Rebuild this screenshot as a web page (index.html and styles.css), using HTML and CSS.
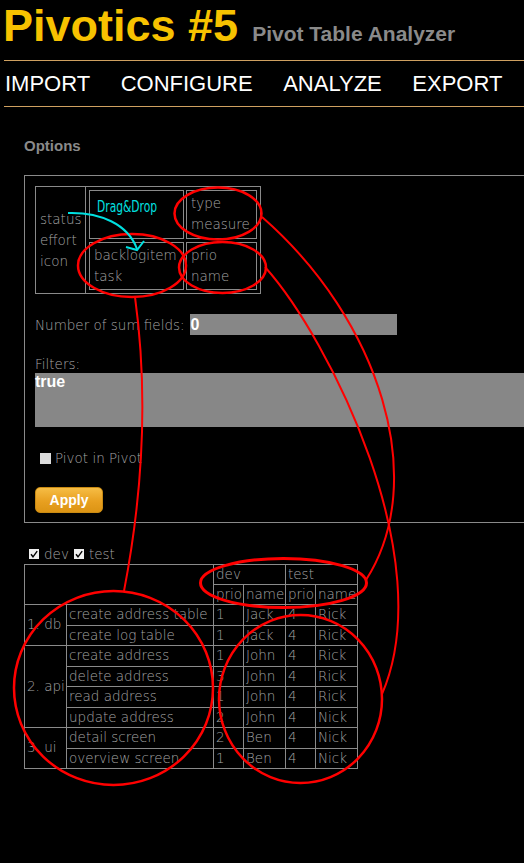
FILE: index.html
```html
<!DOCTYPE html>
<html>
<head>
<meta charset="utf-8">
<title>Pivotics #5</title>
<link rel="stylesheet" href="styles.css">
</head>
<body>
<header class="masthead">
  <div class="brand">
    <h1 class="title">Pivotics #5</h1>
    <span class="subtitle">Pivot Table Analyzer</span>
  </div>
  <nav class="nav">
    <a class="nav-item">IMPORT</a>
    <a class="nav-item">CONFIGURE</a>
    <a class="nav-item">ANALYZE</a>
    <a class="nav-item">EXPORT</a>
  </nav>
</header>

<main class="content">
  <h2 class="section-title">Options</h2>
  <section class="options">
    <div class="fields">
      <div class="fields-pool">status<br>effort<br>icon</div>
      <div class="fields-grid">
        <div class="field-cell"></div>
        <div class="field-cell">type<br>measure</div>
        <div class="field-cell">backlogitem<br>task</div>
        <div class="field-cell">prio<br>name</div>
      </div>
    </div>

    <div class="sum-row">
      <span class="sum-label">Number of sum fields:</span>
      <span class="text-input">0</span>
    </div>

    <div class="filters-label">Filters:</div>
    <div class="textarea">true</div>

    <div class="check-row">
      <span class="box"></span>
      <span>Pivot in Pivot</span>
    </div>

    <button class="apply">Apply</button>
  </section>

  <div class="toggles">
    <span class="toggle"><svg class="tick" width="10" height="10" viewBox="0 0 10 10"><rect width="10" height="10" fill="#efefef"/><path d="M2 5.2 L4 7.8 L8.2 2.2" fill="none" stroke="#000" stroke-width="1.4"/></svg>dev</span>
    <span class="toggle"><svg class="tick" width="10" height="10" viewBox="0 0 10 10"><rect width="10" height="10" fill="#efefef"/><path d="M2 5.2 L4 7.8 L8.2 2.2" fill="none" stroke="#000" stroke-width="1.4"/></svg>test</span>
  </div>

  <table class="pivot">
    <colgroup>
      <col class="c-group"><col class="c-task"><col class="c-prio"><col class="c-name"><col class="c-prio"><col class="c-name2">
    </colgroup>
    <thead>
      <tr><th colspan="2" rowspan="2"></th><th colspan="2">dev</th><th colspan="2">test</th></tr>
      <tr><th>prio</th><th>name</th><th>prio</th><th>name</th></tr>
    </thead>
    <tbody>
      <tr><td rowspan="2">1. db</td><td>create address table</td><td>1</td><td>Jack</td><td>4</td><td>Rick</td></tr>
      <tr><td>create log table</td><td>1</td><td>Jack</td><td>4</td><td>Rick</td></tr>
      <tr><td rowspan="4">2. api</td><td>create address</td><td>1</td><td>John</td><td>4</td><td>Rick</td></tr>
      <tr><td>delete address</td><td>3</td><td>John</td><td>4</td><td>Rick</td></tr>
      <tr><td>read address</td><td>1</td><td>John</td><td>4</td><td>Rick</td></tr>
      <tr><td>update address</td><td>2</td><td>John</td><td>4</td><td>Nick</td></tr>
      <tr><td rowspan="2">3. ui</td><td>detail screen</td><td>2</td><td>Ben</td><td>4</td><td>Nick</td></tr>
      <tr><td>overview screen</td><td>1</td><td>Ben</td><td>4</td><td>Nick</td></tr>
    </tbody>
  </table>
</main>

<svg class="annotations" width="524" height="863" viewBox="0 0 524 863">
  <g fill="none" stroke="#ff0000">
    <ellipse cx="218" cy="213.5" rx="43.5" ry="26" stroke-width="2.5"/>
    <ellipse cx="222.5" cy="267.5" rx="43.5" ry="25.5" stroke-width="2.5"/>
    <ellipse cx="132" cy="265.5" rx="54" ry="31.5" stroke-width="2.5"/>
    <ellipse cx="283.5" cy="583" rx="83" ry="24.5" stroke-width="3"/>
    <ellipse cx="113.5" cy="688" rx="99.5" ry="97" stroke-width="2.5"/>
    <ellipse cx="300.5" cy="699" rx="81.5" ry="84" stroke-width="2.5"/>
    <path d="M135 297 Q154 435 124 591" stroke-width="2"/>
    <path d="M262 217 C380 320 430 480 366 580" stroke-width="2"/>
    <path d="M265 267 C330 340 440 560 382 694" stroke-width="2"/>
  </g>
  <g fill="none" stroke="#00e0e0" stroke-width="2">
    <path d="M68 213 C100 212 128 224 137 249"/>
    <path d="M126 247 L137 250 L144 241"/>
  </g>
  <text class="dnd" x="97" y="212" textLength="60" lengthAdjust="spacingAndGlyphs">Drag&amp;Drop</text>
</svg>
</body>
</html>
```

FILE: styles.css
```css
html {
  overflow: hidden;
}

body {
  margin: 0;
  width: 524px;
  min-height: 863px;
  position: relative;
  background: #000;
  color: #a4a4a4;
  font-family: "DejaVu Sans", "Liberation Sans", sans-serif;
  font-weight: 200;
  font-size: 13.5px;
}

/* ---------- header ---------- */
.masthead {
  margin-left: 4px;
  font-family: "Liberation Sans", Arial, sans-serif;
}

.brand {
  display: flex;
  align-items: baseline;
  height: 61px;
  padding-top: 4px;
  box-sizing: border-box;
  border-bottom: 1px solid #cfa060;
}

.title {
  margin: 0 0 0 -1px;
  font-size: 45px;
  line-height: 44px;
  font-weight: 700;
  color: #f7c200;
}

.subtitle {
  margin-left: 14px;
  font-size: 21px;
  font-weight: 700;
  color: #8a8a8a;
}

.nav {
  display: flex;
  gap: 30.5px;
  height: 45px;
  padding-left: 1px;
  line-height: 45px;
  border-bottom: 1px solid #cfa060;
}

.nav-item {
  font-size: 22px;
  font-weight: 400;
  color: #fff;
}

/* ---------- content ---------- */
.content {
  padding-left: 24px;
}

.section-title {
  margin: 30px 0 21px;
  font-family: "Liberation Sans", Arial, sans-serif;
  font-size: 15px;
  line-height: 17px;
  font-weight: 700;
  color: #8a8a8a;
}

.options {
  width: 580px;
  border: 1px solid #8a8a8a;
  padding: 10px 0 9px 10px;
}

/* drag & drop field layout */
.fields {
  display: flex;
  width: 226px;
  height: 108px;
  box-sizing: border-box;
  border: 1px solid #8a8a8a;
}

.fields-pool {
  width: 50px;
  box-sizing: border-box;
  border-right: 1px solid #8a8a8a;
  padding-left: 4px;
  display: flex;
  align-items: center;
  line-height: 21px;
}

.fields-grid {
  flex: 1;
  display: grid;
  grid-template-columns: 95px 71px;
  grid-template-rows: 1fr 1fr;
  gap: 3px 2px;
  padding: 3px;
}

.field-cell {
  border: 1px solid #8a8a8a;
  padding-left: 4px;
  display: flex;
  flex-direction: column;
  justify-content: center;
  line-height: 21px;
}

.sum-row {
  display: flex;
  align-items: center;
  margin-top: 20px;
  height: 21px;
}

.sum-label {
  margin-right: 5px;
}

.text-input {
  width: 207px;
  height: 21px;
  box-sizing: border-box;
  padding-left: 1px;
  background: #878787;
  color: #fff;
  font-family: "Liberation Sans", Arial, sans-serif;
  font-weight: 700;
  font-size: 16px;
  line-height: 21px;
}

.filters-label {
  margin-top: 21px;
  line-height: 16px;
}

.textarea {
  margin-top: 1px;
  width: 600px;
  height: 54px;
  background: #878787;
  color: #fff;
  font-family: "Liberation Sans", Arial, sans-serif;
  font-weight: 700;
  font-size: 16px;
  line-height: 18px;
}

.check-row {
  display: flex;
  align-items: center;
  gap: 4px;
  height: 16px;
  margin-top: 23px;
  padding-left: 5px;
  line-height: 16px;
}

.box {
  width: 11px;
  height: 11px;
  background: #dcdcdc;
}

.apply {
  display: block;
  margin-top: 21px;
  width: 68px;
  height: 26px;
  padding: 0;
  border: 1px solid #c98a12;
  border-radius: 5px;
  background: linear-gradient(#f6bd45, #e8a020 55%, #dc9414);
  color: #fff;
  font-family: "Liberation Sans", Arial, sans-serif;
  font-weight: 700;
  font-size: 14px;
}

/* ---------- toggles ---------- */
.toggles {
  display: flex;
  align-items: center;
  height: 16px;
  margin-top: 23px;
  padding-left: 5px;
  line-height: 16px;
}

.toggle {
  display: flex;
  align-items: center;
  gap: 5px;
  margin-right: 5px;
}

.tick {
  display: block;
}

/* ---------- pivot table ---------- */
.pivot {
  margin-top: 2px;
  border-collapse: collapse;
  table-layout: fixed;
  width: 333px;
  border: 1px solid #8a8a8a;
}

.c-group { width: 42px; }
.c-task { width: 147px; }
.c-prio { width: 30px; }
.c-name { width: 42px; }
.c-name2 { width: 42px; }

.pivot th,
.pivot td {
  border: 1px solid #8a8a8a;
  padding: 0 1px 0 2px;
  text-align: left;
  font-weight: 200;
  white-space: nowrap;
  overflow: hidden;
}

.pivot th {
  line-height: 19px;
}

.pivot td {
  line-height: 19.5px;
}

/* ---------- annotation overlay ---------- */
.annotations {
  position: absolute;
  top: 0;
  left: 0;
  pointer-events: none;
}

.dnd {
  font-family: "DejaVu Sans Condensed", "DejaVu Sans", sans-serif;
  font-size: 16px;
  font-weight: 400;
  fill: #00e0e0;
}
```
